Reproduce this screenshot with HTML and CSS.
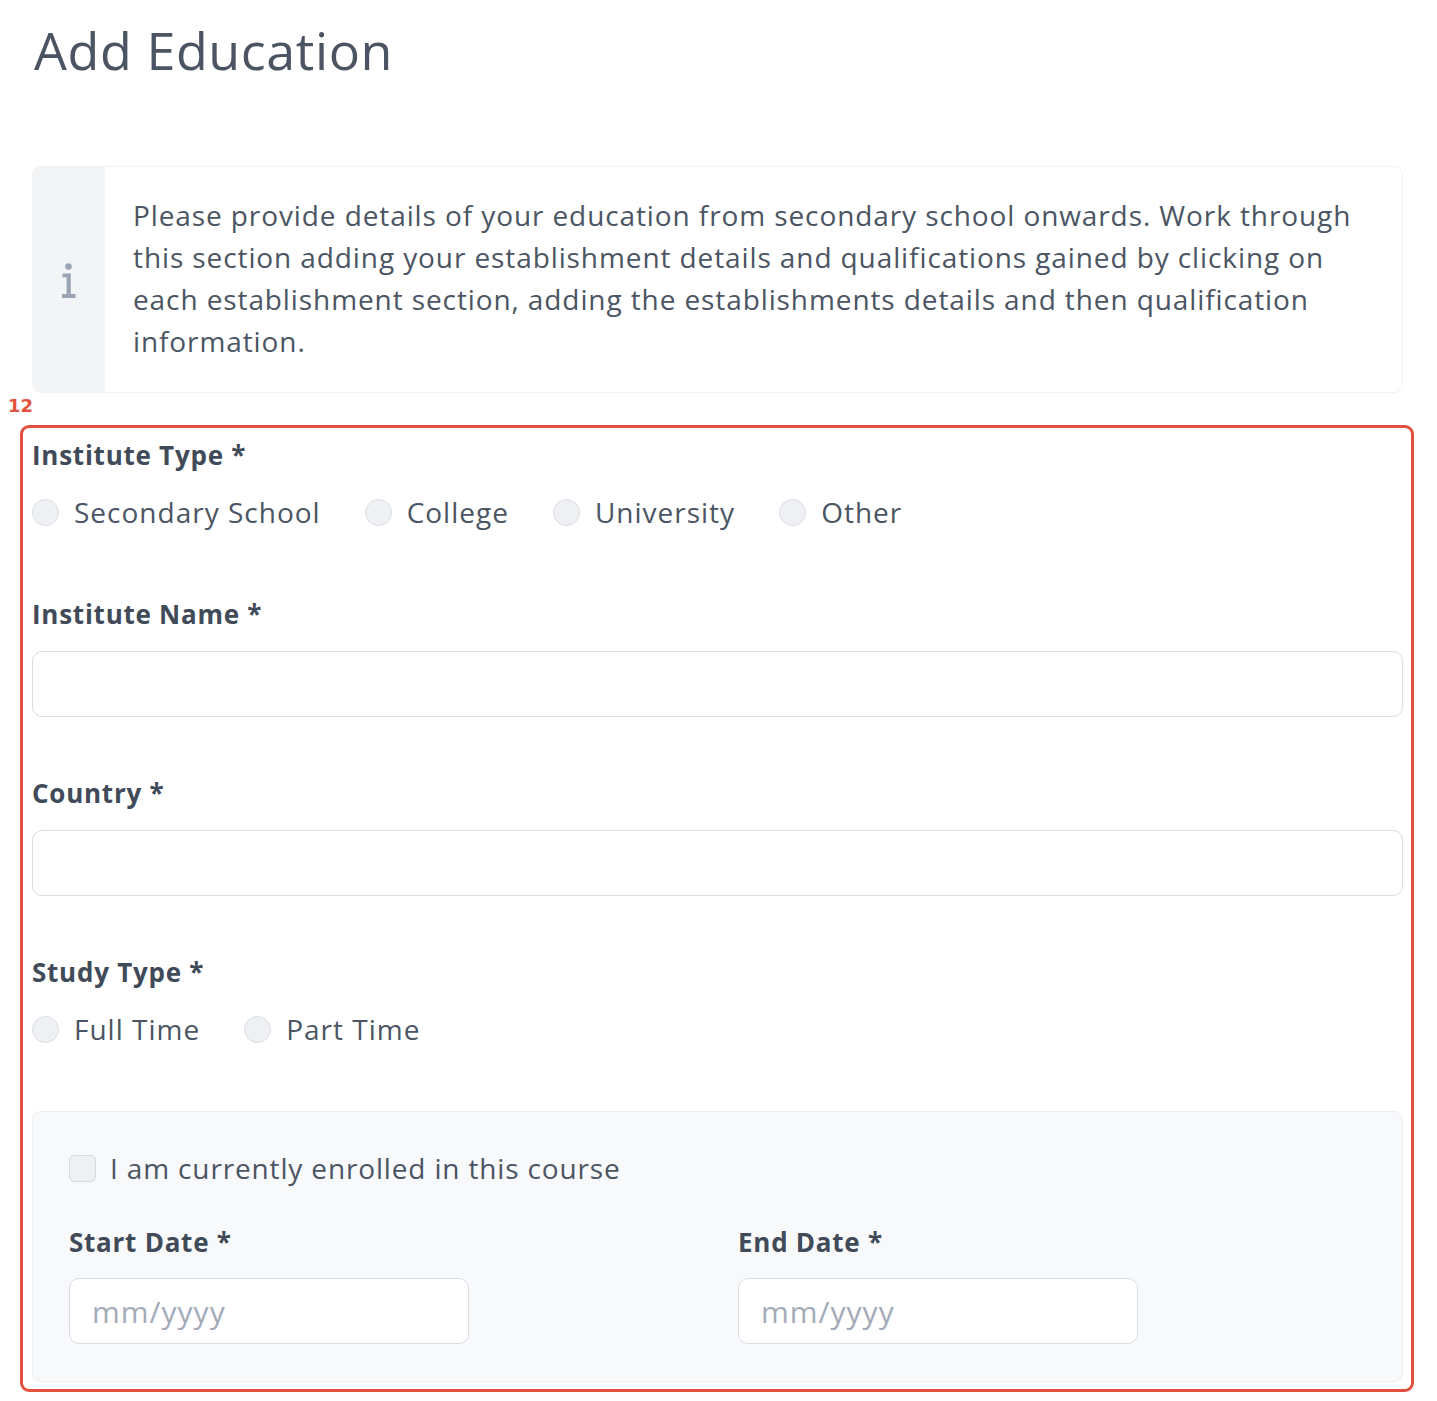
FILE: index.html
```html
<!DOCTYPE html>
<html lang="en">
<head>
<meta charset="utf-8">
<title>Add Education</title>
<link rel="stylesheet" href="styles.css">
</head>
<body>
<div class="page">
  <h1 class="title">Add Education</h1>

  <div class="info">
    <div class="info-icon">
      <svg width="16" height="36" viewBox="0 0 16 36" aria-hidden="true">
        <circle cx="7.5" cy="3.5" r="3.3" fill="#9ba3b4"/>
        <path d="M1.5 10.5 H9.8 V31 H14.5 V35 H1 V31 H5.6 V14.3 H1.5 Z" fill="#9ba3b4"/>
      </svg>
    </div>
    <p class="info-text">Please provide details of your education from secondary school onwards. Work through this section adding your establishment details and qualifications gained by clicking on each establishment section, adding the establishments details and then qualification information.</p>
  </div>

  <div class="anno-wrap">
    <span class="anno-num">12</span>
    <div class="anno-box">
      <form class="form">
        <div class="field">
          <div class="label">Institute Type *</div>
          <div class="radios">
            <label class="radio"><span class="dot"></span>Secondary School</label>
            <label class="radio"><span class="dot"></span>College</label>
            <label class="radio"><span class="dot"></span>University</label>
            <label class="radio"><span class="dot"></span>Other</label>
          </div>
        </div>

        <div class="field field-input">
          <div class="label">Institute Name *</div>
          <div class="input"></div>
        </div>

        <div class="field field-input">
          <div class="label">Country *</div>
          <div class="input"></div>
        </div>

        <div class="field field-study">
          <div class="label">Study Type *</div>
          <div class="radios radios-study">
            <label class="radio"><span class="dot"></span>Full Time</label>
            <label class="radio"><span class="dot"></span>Part Time</label>
          </div>
        </div>

        <div class="panel">
          <label class="check"><span class="box"></span>I am currently enrolled in this course</label>
          <div class="dates">
            <div class="date">
              <div class="label">Start Date *</div>
              <div class="input input-date"><span class="ph">mm/yyyy</span></div>
            </div>
            <div class="date">
              <div class="label">End Date *</div>
              <div class="input input-date"><span class="ph">mm/yyyy</span></div>
            </div>
          </div>
        </div>
      </form>
    </div>
  </div>
</div>
</body>
</html>
```

FILE: styles.css
```css
* { box-sizing: border-box; }
html, body { margin: 0; padding: 0; background: #ffffff; }
body {
  font-family: "Open Sans", "Noto Sans", "DejaVu Sans", sans-serif;
  color: #4b5563;
}
.page {
  padding: 0 34px 20px 32px;
}
.title {
  margin: 0;
  padding: 20px 0 0 2px;
  font-size: 52px;
  line-height: 60px;
  font-weight: 500;
  color: #4a5462;
  letter-spacing: 0.6px;
}
.info {
  margin-top: 86px;
  display: flex;
  border: 1px solid #f0f1f3;
  border-radius: 9px;
  overflow: hidden;
  min-height: 227px;
}
.info-icon {
  width: 72px;
  flex: none;
  background: #f3f4f6;
  display: flex;
  align-items: center;
  justify-content: center;
  padding-top: 2px;
}
.info-text {
  margin: 0;
  padding: 27px 34px 26px 28px;
  font-size: 28px;
  line-height: 42px;
  letter-spacing: 0.9px;
  color: #4b5563;
}
.anno-wrap {
  position: relative;
  margin: 32px -11px 0 -12px;
}
.anno-num {
  position: absolute;
  left: -12px; top: -29px;
  font-family: "DejaVu Sans", sans-serif;
  font-weight: 700;
  font-size: 18px;
  line-height: 20px;
  color: #e2513d;
}
.anno-box {
  border: 3px solid #e2513d;
  border-radius: 9px;
  padding: 9px 8px 7px 9px;
}
.form {
  margin: 0;
  display: flex;
  flex-direction: column;
}
.label {
  font-size: 26px;
  line-height: 36px;
  font-weight: 700;
  letter-spacing: 0.75px;
  color: #404a58;
}
.radios {
  display: flex;
  gap: 44px;
  margin-top: 21px;
}
.radio {
  display: flex;
  align-items: center;
  gap: 15px;
  font-size: 28px;
  line-height: 36px;
  letter-spacing: 1px;
  color: #4b5563;
}
.dot {
  width: 27px; height: 27px;
  border-radius: 50%;
  background: #eef0f3;
  border: 1px solid #d9dde3;
  flex: none;
}
.field-input { margin-top: 66px; }
.field-input + .field-input { margin-top: 58px; }
.field-study { margin-top: 58px; }
.input {
  margin-top: 19px;
  height: 66px;
  border: 1.5px solid #dadde3;
  border-radius: 10px;
  background: #ffffff;
}
.panel {
  margin-top: 64px;
  background: #f8f9fb;
  border: 1.5px solid #eceef1;
  border-radius: 9px;
  padding: 38px 36px 37px 36px;
}
.check {
  display: flex;
  align-items: center;
  gap: 14px;
  font-size: 28px;
  line-height: 36px;
  letter-spacing: 0.85px;
  color: #4b5563;
}
.box {
  width: 27px; height: 27px;
  border-radius: 5px;
  background: #eef0f3;
  border: 1px solid #d6dae0;
  flex: none;
}
.dates {
  margin-top: 38px;
  display: grid;
  grid-template-columns: 1fr 1fr;
  column-gap: 41px;
}
.input-date {
  margin-top: 18px;
  width: 400px;
  display: flex;
  align-items: center;
  padding-left: 22px;
}
.ph {
  font-size: 30px;
  letter-spacing: 1px;
  color: #a3abb8;
}
```
